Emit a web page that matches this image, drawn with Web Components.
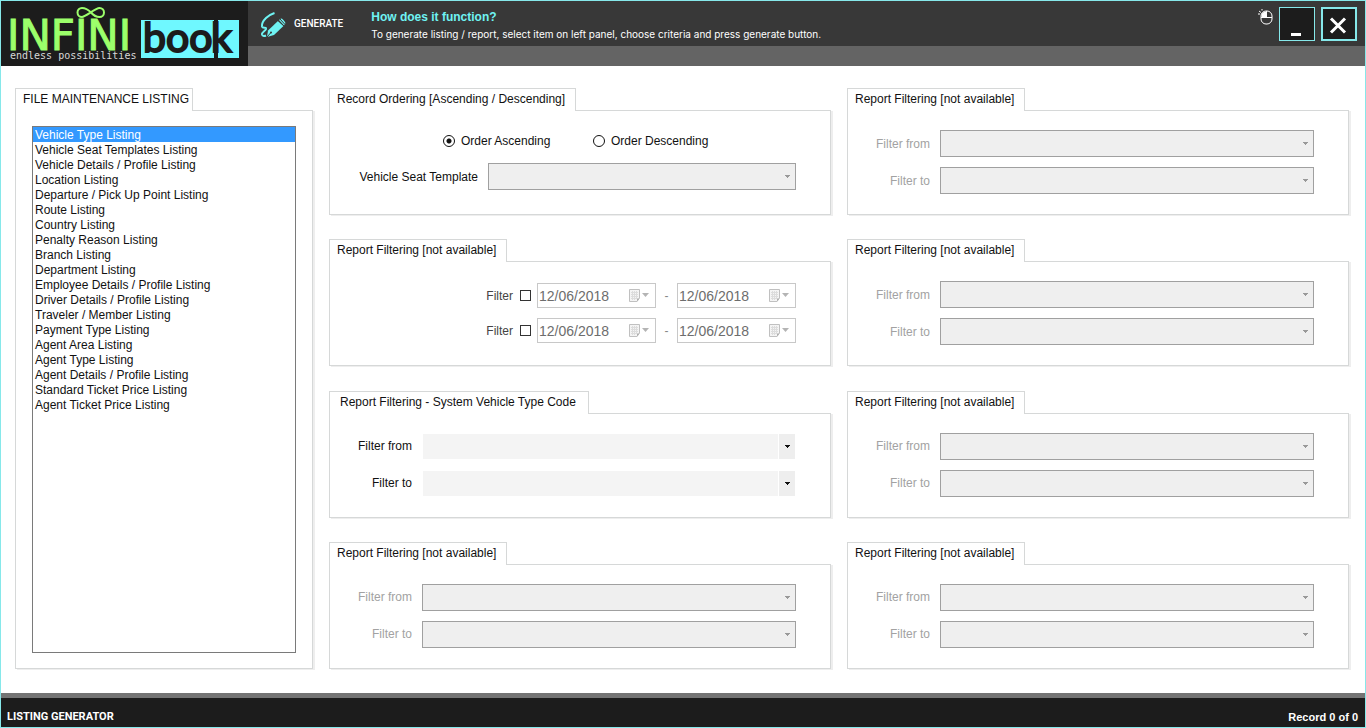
<!DOCTYPE html>
<html lang="en">
<head>
<meta charset="utf-8">
<title>Listing Generator</title>
<style>
	body {
		margin: 0;
		font: 12px/16px "Liberation Sans", Arial, sans-serif;
		color: #111;
		background: #fff;
	}
</style>
</head>
<body>
<listing-app></listing-app>

<script>
class BaseElement extends HTMLElement {

	constructor() {
		super();
		this.attachShadow({ mode: 'open' });
	}

	connectedCallback() {
		this.shadowRoot.innerHTML = `
			<style>
			* { box-sizing: border-box; }
			:host { box-sizing: border-box; display: block; }
			button, input, select { font: inherit; margin: 0; border-radius: 0; }
			svg { display: block; }
			${this.style_()}
			</style>
			${this.render()}
		`;
	}

	style_() { return ''; }
	render() { return ''; }
}

class AppLogo extends BaseElement {
	style_() {
		return `
			:host { background: #1c1c1c; flex: none; }
			.name { font: 42px "DejaVu Sans", sans-serif; fill: #9cff6b; stroke: #9cff6b; }
			.book { font: 41px Lato, sans-serif; fill: #1c1c1c; stroke: #1c1c1c; stroke-width: 2; }
			.tag { font: 10px "DejaVu Sans Mono", monospace; fill: #d8d8d8; }
		`;
	}

	render() {
		return `
			<svg width="247" height="65" viewBox="1 1 247 65">
				<text class="name" x="7" y="50">INFINI</text>
				<path d="M91 12.500C87 8.500 84 8 82 8C79.500 8 77.500 10 77.500 12.500S79.500 17 82 17C86 17 95 8 99.500 8C102 8 104 10 104 12.500S102 17 99.500 17C97 17 94 16 91 12.500Z" fill="none" stroke="#9cff6b" stroke-width="2"/>
				<rect x="141" y="20" width="73" height="38" fill="#6ff8ff"/>
				<rect x="218" y="20" width="21" height="38" fill="#6ff8ff"/>
				<text class="book" x="143" y="52">boo<tspan x="211">k</tspan></text>
				<text class="tag" x="10" y="59">endless possibilities</text>
			</svg>
		`;
	}
}
customElements.define('app-logo', AppLogo);

class WindowButton extends BaseElement {
	style_() {
		return `
			button {
				display: block;
				width: 36px;
				height: 34px;
				padding: 0;
				background: #1c1c1c;
				border: 1px solid #86e8ea;
			}
			button.close { border-width: 2px; }
			svg { margin: auto; }
		`;
	}

	render() {
		const action = this.getAttribute('action');
		const shape = action === 'close'
			? '<path d="M7 9.500L21 23.500M21 9.500L7 23.500" stroke="#fff" stroke-width="3"/>'
			: '<path d="M9 25.500H19" stroke="#fff" stroke-width="3"/>';
		return `
			<button class="${action}" aria-label="${action}">
				<svg width="30" height="30" viewBox="0 0 30 30">${shape}</svg>
			</button>
		`;
	}
}
customElements.define('window-button', WindowButton);

class AppHeader extends BaseElement {
	style_() {
		return `
			:host { display: flex; background: #646464; }
			.bar {
				flex: 1;
				height: 45px;
				padding: 0 8px 0 11px;
				display: flex;
				align-items: center;
				background: #383838;
				color: #fff;
			}
			.generate {
				display: flex;
				align-items: center;
				gap: 8px;
				padding: 0;
				border: 0;
				background: none;
				color: #fff;
				font: 500 10px/16px Roboto, sans-serif;
			}
			.help { flex: 1; margin-left: 28px; padding-top: 4px; }
			h1 { margin: 0; font-size: 12px; line-height: 16px; color: #6ff3f3; }
			p { margin: 0; font: 10px/18px Inter, sans-serif; }
			.tools { display: flex; gap: 6px; align-self: flex-start; padding-top: 6px; }
			.mouse { margin-top: 2px; }
		`;
	}

	render() {
		return `
			<app-logo></app-logo>
			<div class="bar">
				<button class="generate">
					<svg width="27" height="28" viewBox="0 0 27 28">
						<path d="M15.500 3C11 4.500 9 6 7 8C4.500 10.500 2.500 13.500 3 16.500C3.500 19 7.500 16.500 7 19C6.500 21 2.500 22 3 24.500C3.500 26.500 6 26 7 25.500" fill="none" stroke="#6ff3f3" stroke-width="2"/>
						<path d="M8 27L9 20.500L19 11L24.500 16L15 25Z" fill="#6ff3f3"/>
						<path d="M20 10L22 8.500Q24 8.500 26.500 13L25 15.500Z" fill="#6ff3f3"/>
						<path d="M19 10.500L25 16M21 9L26 14.500" stroke="#383838"/>
						<path d="M8 27L12 22.500" stroke="#383838"/>
						<circle cx="12" cy="22.500" r="1" fill="#383838"/>
					</svg>
					GENERATE
				</button>
				<div class="help">
					<h1>How does it function?</h1>
					<p>To generate listing / report, select item on left panel, choose criteria and press generate button.</p>
				</div>
				<div class="tools">
					<svg class="mouse" width="15" height="16" viewBox="0 0 15 16">
						<rect x="3" y="2" width="11" height="13" rx="5" fill="none" stroke="#fff"/>
						<path d="M3 8.500H14M8.500 2V8.500" stroke="#fff"/>
						<path d="M8.500 2.500V8.500H3.500V6Q4 2.500 8.500 2.500Z" fill="#fff"/>
						<path d="M0 5H2M1 2L3 3.500M4 0V1.500" stroke="#fff"/>
					</svg>
					<window-button action="minimise"></window-button>
					<window-button action="close"></window-button>
				</div>
			</div>
		`;
	}
}
customElements.define('app-header', AppHeader);

class TabPanel extends BaseElement {
	style_() {
		return `
			:host { display: flex; flex-direction: column; min-width: 0; }
			h2 {
				position: relative;
				align-self: flex-start;
				height: 23px;
				margin: 0 0 -1px;
				padding: 2px 10px 0 7px;
				border: 1px solid #d6d8d8;
				border-bottom: 0;
				background: #fff;
				font-size: 12px;
				line-height: 16px;
				font-weight: normal;
			}
			:host([wide]) h2 { padding: 2px 12px 0 10px; }
			:host([narrow]) h2 { padding: 2px 3px 0 7px; }
			.body {
				flex: 1;
				display: flex;
				flex-direction: column;
				min-height: 105px;
				padding: var(--panel-padding, 19px 34px 19px 27px);
				border: 1px solid #d6d8d8;
				box-shadow: 2px 1px 0 #eee;
			}
		`;
	}

	render() {
		return `
			<h2>${this.getAttribute('heading')}</h2>
			<div class="body"><slot></slot></div>
		`;
	}
}
customElements.define('tab-panel', TabPanel);

class ComboField extends BaseElement {
	style_() {
		return `
			:host { display: flex; align-items: center; gap: 10px; }
			label { min-width: 55px; text-align: right; }
			:host([strong]) label { min-width: 121px; }
			:host([disabled]:not([strong])) label { color: #a2a2a2; }
			.box { flex: 1; display: grid; align-items: center; }
			select, .arrow { grid-area: 1 / 1; }
			select {
				appearance: none;
				width: 100%;
				height: 27px;
				border: 1px solid #fff;
				background: #f4f4f4;
				opacity: 1;
			}
			select:disabled { border-color: #a0a0a0; background: #efefef; }
			.arrow {
				justify-self: end;
				display: grid;
				place-items: center;
				width: 17px;
				height: 25px;
				margin-right: 1px;
				border-left: 1px solid #fff;
				background: #eee;
				pointer-events: none;
			}
			:host([disabled]) .arrow { border-color: transparent; background: none; color: #999; }
		`;
	}

	render() {
		const disabled = this.hasAttribute('disabled') ? 'disabled' : '';
		return `
			<label for="combo">${this.getAttribute('label')}</label>
			<div class="box">
				<select id="combo" ${disabled}></select>
				<span class="arrow">
					<svg width="5" height="3" viewBox="0 0 5 3" shape-rendering="crispEdges"><path d="M0 0H5V1H4V2H3V3H2V2H1V1H0Z" fill="currentColor"/></svg>
				</span>
			</div>
		`;
	}
}
customElements.define('combo-field', ComboField);

class FilterRange extends BaseElement {
	style_() {
		return ':host { display: grid; gap: 10px; }';
	}

	render() {
		const disabled = this.hasAttribute('disabled') ? 'disabled' : '';
		return ['Filter from', 'Filter to']
			.map(label => `<combo-field label="${label}" ${disabled}></combo-field>`)
			.join('');
	}
}
customElements.define('filter-range', FilterRange);

class OrderOptions extends BaseElement {
	style_() {
		return `
			:host { display: flex; height: 21px; margin: 0 0 12px 86px; }
			label { display: flex; align-items: center; gap: 6px; width: 150px; }
			input {
				appearance: none;
				width: 12px;
				height: 12px;
				border: 1px solid #111;
				border-radius: 50%;
			}
			input:checked { background: radial-gradient(circle, #111 2px, #fff 3px); }
		`;
	}

	render() {
		return `
			<label><input type="radio" name="order" checked>Order Ascending</label>
			<label><input type="radio" name="order">Order Descending</label>
		`;
	}
}
customElements.define('order-options', OrderOptions);

class DateBox extends BaseElement {
	style_() {
		return `
			:host {
				display: flex;
				align-items: center;
				width: 119px;
				height: 25px;
				padding-right: 5px;
				border: 1px solid #c8c8c8;
			}
			input {
				flex: 1;
				min-width: 0;
				height: 23px;
				padding: 0 0 0 1px;
				border: 0;
				background: none;
				color: #6d6d6d;
				font-size: 14px;
			}
			button { padding: 0; border: 0; background: none; }
		`;
	}

	render() {
		return `
			<input type="text" aria-label="${this.getAttribute('label')}" value="${this.getAttribute('value')}" disabled>
			<button aria-label="Open calendar" disabled>
				<svg width="21" height="13" viewBox="0 0 21 13">
					<path d="M.5 .5H10.500V9L8 12.500H.5Z" fill="#f4f4f4" stroke="#c0c0c0"/>
					<path d="M2 3.500H9M2 5.500H9M2 7.500H9M2 9.500H8M3.500 2V11M5.500 2V11M7.500 2V10" stroke="#dcdcdc"/>
					<path d="M8 12.500V9.500H10.500Z" fill="#b0b0b0"/>
					<path d="M13 4H20L16.500 8Z" fill="#b4b4b4"/>
				</svg>
			</button>
		`;
	}
}
customElements.define('date-box', DateBox);

class DateFilter extends BaseElement {
	style_() {
		return `
			:host { display: flex; justify-content: flex-end; align-items: center; color: #666; }
			label { display: flex; align-items: center; gap: 7px; margin-right: 6px; color: #444; }
			input {
				appearance: none;
				width: 11px;
				height: 11px;
				border: 1px solid #333;
				background: #fff;
			}
			.dash { width: 21px; text-align: center; color: #888; }
		`;
	}

	render() {
		return `
			<label>Filter<input type="checkbox"></label>
			<date-box label="Date from" value="12/06/2018"></date-box>
			<span class="dash">-</span>
			<date-box label="Date to" value="12/06/2018"></date-box>
		`;
	}
}
customElements.define('date-filter', DateFilter);

const LISTINGS = [
	'Vehicle Type Listing',
	'Vehicle Seat Templates Listing',
	'Vehicle Details / Profile Listing',
	'Location Listing',
	'Departure / Pick Up Point Listing',
	'Route Listing',
	'Country Listing',
	'Penalty Reason Listing',
	'Branch Listing',
	'Department Listing',
	'Employee Details / Profile Listing',
	'Driver Details / Profile Listing',
	'Traveler / Member Listing',
	'Payment Type Listing',
	'Agent Area Listing',
	'Agent Type Listing',
	'Agent Details / Profile Listing',
	'Standard Ticket Price Listing',
	'Agent Ticket Price Listing'
];

class ListingBox extends BaseElement {
	style_() {
		return `
			:host { flex: 1; display: flex; }
			select {
				flex: 1;
				min-width: 0;
				padding: 0;
				border: 1px solid #7a7a7a;
				background: #fff;
				color: #111;
				outline: 0;
			}
			option { height: 15px; min-height: 15px; padding: 1px 2px 0; line-height: 14px; }
			option:checked { background: #3399ff linear-gradient(#3399ff, #3399ff); color: #fff; }
		`;
	}

	render() {
		const options = LISTINGS.map((name, i) => `<option ${i === 0 ? 'selected' : ''}>${name}</option>`).join('');
		return `<select size="${LISTINGS.length}" aria-label="File maintenance listing">${options}</select>`;
	}
}
customElements.define('listing-box', ListingBox);

class AppFooter extends BaseElement {
	style_() {
		return `
			:host {
				display: flex;
				justify-content: space-between;
				align-items: center;
				height: 34px;
				padding: 8px 7px 0 6px;
				border-top: 5px solid #747474;
				background: #1c1c1c;
				color: #fff;
				font-size: 11px;
				font-weight: bold;
			}
			.title { font-family: Roboto, sans-serif; }
		`;
	}

	render() {
		return `
			<span class="title">LISTING GENERATOR</span>
			<span>Record 0 of 0</span>
		`;
	}
}
customElements.define('app-footer', AppFooter);

class ListingApp extends BaseElement {
	style_() {
		return `
			:host {
				display: flex;
				flex-direction: column;
				min-height: 100vh;
				border: 1px solid #86e8ea;
			}
			main {
				flex: 1;
				display: grid;
				grid-template-columns: 298px 1fr 1fr;
				gap: 16px;
				padding: 22px 16px 24px 14px;
			}
			.column {
				display: flex;
				flex-direction: column;
				justify-content: space-between;
				gap: 16px;
			}
			.listing { --panel-padding: 15px 16px; }
			.dates { --panel-padding: 21px 34px 19px 27px; }
			date-filter + date-filter { margin-top: 10px; }
		`;
	}

	render() {
		const unavailable = `
			<tab-panel heading="Report Filtering [not available]">
				<filter-range disabled></filter-range>
			</tab-panel>
		`;
		return `
			<app-header></app-header>
			<main>
				<tab-panel class="listing" narrow heading="FILE MAINTENANCE LISTING">
					<listing-box></listing-box>
				</tab-panel>
				<div class="column">
					<tab-panel heading="Record Ordering [Ascending / Descending]">
						<order-options></order-options>
						<combo-field label="Vehicle Seat Template" disabled strong></combo-field>
					</tab-panel>
					<tab-panel class="dates" heading="Report Filtering [not available]">
						<date-filter></date-filter>
						<date-filter></date-filter>
					</tab-panel>
					<tab-panel wide heading="Report Filtering - System Vehicle Type Code">
						<filter-range></filter-range>
					</tab-panel>
					${unavailable}
				</div>
				<div class="column">${unavailable.repeat(4)}</div>
			</main>
			<app-footer></app-footer>
		`;
	}
}
customElements.define('listing-app', ListingApp);
</script>
</body>
</html>
